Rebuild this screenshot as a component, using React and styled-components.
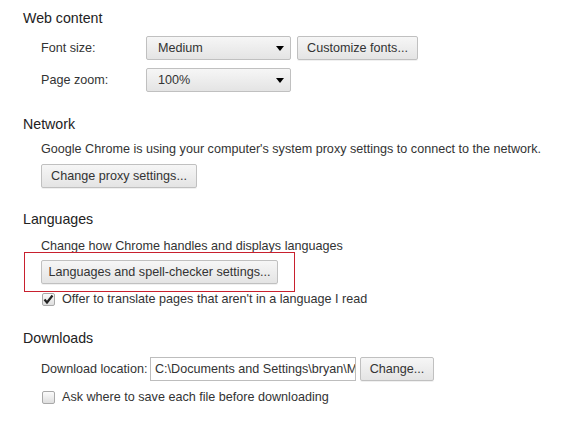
import React from 'react'
import styled, {createGlobalStyle} from 'styled-components'

const GlobalStyle = createGlobalStyle`
  body {
    margin: 0;
    background: #fff;
    font-family: "Liberation Sans", Arial, sans-serif;
    color: #333;
  }
`

const fontSize = '12.6px'

const Page = styled.div`
  width: 574px;
  height: 422px;
  padding: 8px 0 0 23px;
  box-sizing: border-box;
  overflow: hidden;
`

const Section = styled.section`
  margin-top: ${({gap}) => gap}px;
`

const Heading = styled.h3`
  margin: 0;
  font-size: 14.2px;
  font-weight: normal;
  line-height: 20px;
  color: #222;
`

const Body = styled.div`
  padding-left: 18px;
  display: flex;
  flex-direction: column;
  align-items: flex-start;
`

const Row = styled.div`
  display: flex;
  align-items: center;
  gap: ${({gap}) => gap || 6}px;
  margin-top: ${({top}) => top}px;
`

const Label = styled.span`
  font-size: ${fontSize};
  line-height: 20px;
  white-space: nowrap;
  flex-shrink: 0;
  width: ${({width}) => width ? `${width}px` : 'auto'};
`

const Text = styled.div`
  font-size: ${fontSize};
  line-height: 20px;
  margin-top: ${({top}) => top}px;
  white-space: nowrap;
`

const Button = styled.button`
  font-family: inherit;
  font-size: ${fontSize};
  color: #333;
  white-space: nowrap;
  flex-shrink: 0;
  height: 24px;
  padding: 0;
  margin-top: ${({top}) => top || 0}px;
  border: 1px solid #c0c0c0;
  border-radius: 2px;
  background: linear-gradient(#f6f6f6, #e4e4e4);
  box-shadow: 0 1px 0 rgba(0, 0, 0, 0.06);
  width: ${({width}) => width}px;
  cursor: pointer;
`

const Select = styled.div`
  position: relative;
  box-sizing: border-box;
  flex-shrink: 0;
  width: ${({width}) => width}px;
  height: 24px;
  padding-left: 11px;
  display: flex;
  align-items: center;
  font-size: ${fontSize};
  color: #333;
  border: 1px solid #c0c0c0;
  border-radius: 2px;
  background: linear-gradient(#f6f6f6, #e4e4e4);
`

const Arrow = styled.span`
  position: absolute;
  right: 6px;
  top: 9px;
  width: 0;
  height: 0;
  border-left: 4.5px solid transparent;
  border-right: 4.5px solid transparent;
  border-top: 5px solid #000;
`

const Highlight = styled.div`
  position: relative;
  margin-top: ${({top}) => top}px;
  &::after {
    content: '';
    position: absolute;
    left: -17px;
    right: -17px;
    top: -8px;
    bottom: -8px;
    border: 1px solid #c8202e;
    pointer-events: none;
  }
`

const Box = styled.span`
  box-sizing: border-box;
  flex-shrink: 0;
  width: 13px;
  height: 13px;
  border: 1px solid #a9a9a9;
  border-radius: 2px;
  background: linear-gradient(#fbfbfb, #dedede);
  display: flex;
  align-items: center;
  justify-content: center;
  margin-left: 1px;
`

const Input = styled.div`
  box-sizing: border-box;
  flex-shrink: 0;
  width: 206px;
  height: 24px;
  border: 1px solid #bdbdbd;
  padding: 0 4px;
  display: flex;
  align-items: center;
  font-size: ${fontSize};
  color: #333;
  white-space: nowrap;
  overflow: hidden;
  background: #fff;
`

const Check = ({checked}) =>
  <Box>
    {checked &&
      <svg width="11" height="11" viewBox="0 0 11 11">
        <path d="M1.5 5.5 L4 8.5 L9.5 1.5" fill="none" stroke="#222" strokeWidth="2.2"/>
      </svg>}
  </Box>

const Dropdown = ({value, width}) =>
  <Select width={width}>
    {value}
    <Arrow/>
  </Select>

const App = () =>
  <Page>
    <GlobalStyle/>
    <Section gap={0}>
      <Heading>Web content</Heading>
      <Body>
        <Row top={8}>
          <Label width={99}>Font size:</Label>
          <Dropdown value="Medium" width={145}/>
          <Button width={121}>Customize fonts...</Button>
        </Row>
        <Row top={8}>
          <Label width={99}>Page zoom:</Label>
          <Dropdown value="100%" width={145}/>
        </Row>
      </Body>
    </Section>
    <Section gap={22}>
      <Heading>Network</Heading>
      <Body>
        <Text top={5}>Google Chrome is using your computer's system proxy settings to connect to the network.</Text>
        <Button top={5} width={156}>Change proxy settings...</Button>
      </Body>
    </Section>
    <Section gap={21}>
      <Heading>Languages</Heading>
      <Body>
        <Text top={7}>Change how Chrome handles and displays languages</Text>
        <Highlight top={4}>
          <Button width={237}>Languages and spell-checker settings...</Button>
        </Highlight>
        <Row top={5} gap={7}>
          <Check checked/>
          <Label>Offer to translate pages that aren't in a language I read</Label>
        </Row>
      </Body>
    </Section>
    <Section gap={19}>
      <Heading>Downloads</Heading>
      <Body>
        <Row top={9} gap={4}>
          <Label width={105}>Download location:</Label>
          <Input>C:\Documents and Settings\bryan\My Documents\Downloads</Input>
          <Button width={74}>Change...</Button>
        </Row>
        <Row top={6} gap={7}>
          <Check/>
          <Label>Ask where to save each file before downloading</Label>
        </Row>
      </Body>
    </Section>
  </Page>

export default App
